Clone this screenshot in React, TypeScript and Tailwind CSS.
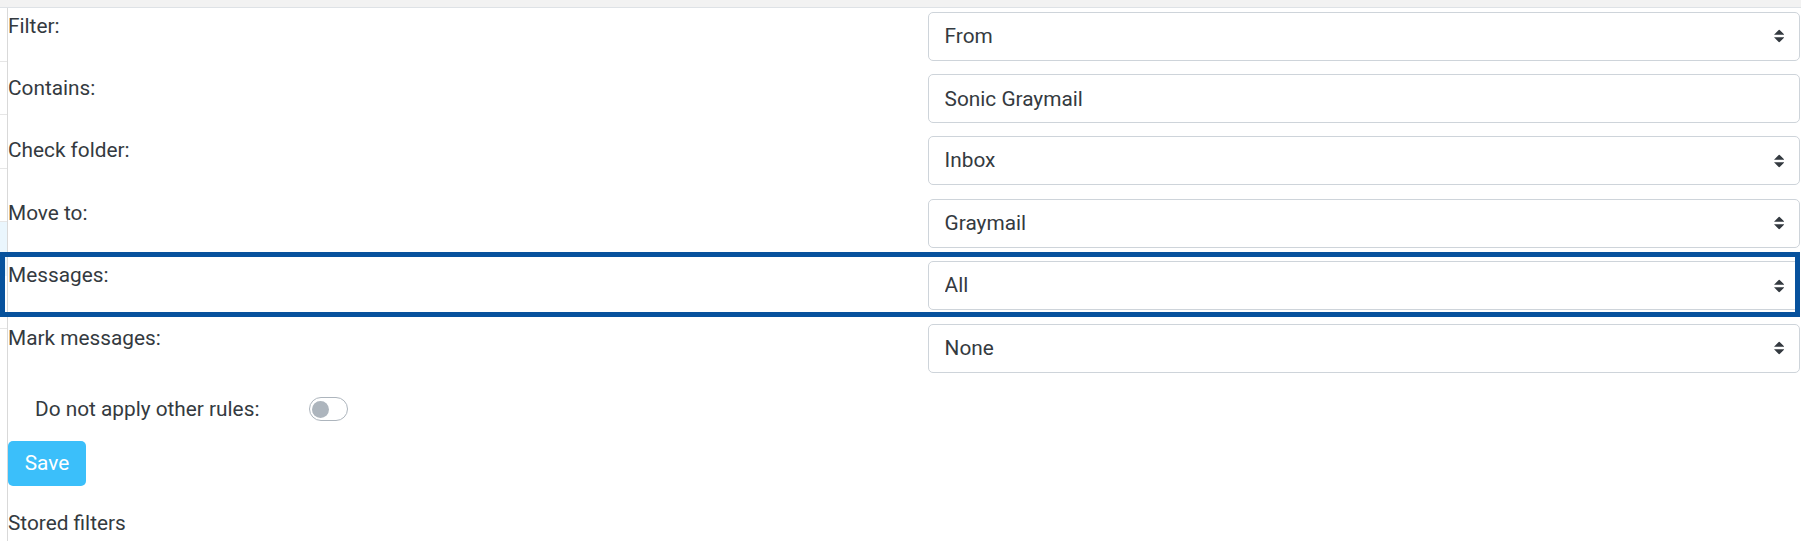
import React from "react";

type Row = {
  label: string;
  value: string;
  kind: "select" | "input";
  highlight?: boolean;
};

const rows: Row[] = [
  { label: "Filter:", value: "From", kind: "select" },
  { label: "Contains:", value: "Sonic Graymail", kind: "input" },
  { label: "Check folder:", value: "Inbox", kind: "select" },
  { label: "Move to:", value: "Graymail", kind: "select" },
  { label: "Messages:", value: "All", kind: "select", highlight: true },
  { label: "Mark messages:", value: "None", kind: "select" },
];

const SortArrows = () => (
  <svg
    viewBox="0 0 4 5"
    className="pointer-events-none absolute right-[15.6px] top-1/2 -translate-y-1/2 w-[10.4px] h-[13px]"
  >
    <path fill="#343a40" d="M2 0L0 2h4zm0 5L0 3h4z" />
  </svg>
);

const FieldRow = ({ row }: { row: Row }) => {
  return (
    <div className="relative flex h-[62.4px]">
      <div className="w-[920px] shrink-0">{row.label}</div>
      <div className="relative flex-1 mt-[1px] h-[49px]">
        {row.kind === "select" ? (
          <>
            <select
              defaultValue={row.value}
              className="appearance-none w-full h-full border border-[#ced4da] rounded-[5px] bg-white pl-[15.6px] pr-[36px] text-[#343a40] outline-none"
            >
              <option>{row.value}</option>
            </select>
            <SortArrows />
          </>
        ) : (
          <input
            defaultValue={row.value}
            className="w-full h-full border border-[#ced4da] rounded-[5px] bg-white px-[15.6px] text-[#343a40] outline-none"
          />
        )}
      </div>
      {row.highlight && (
        <div className="pointer-events-none absolute left-[-8px] right-0 top-[-8.3px] h-[65px] border-[5px] border-[#07529d]" />
      )}
    </div>
  );
};

const App = () => {
  const sideItems = [0, 1, 2, 3, 4, 5];

  return (
    <div className="w-[1801px] h-[541px] overflow-hidden bg-white flex flex-col font-['Roboto','Liberation_Sans',sans-serif] text-[20.8px] leading-[1.5] text-[#343a40]">
      <div className="h-[8px] shrink-0 bg-[#f2f2f2] border-b border-[#dee2e6]" />

      <div className="flex flex-1 min-h-0">
        <aside className="w-[8px] shrink-0 border-r border-[#d9d9d9] flex flex-col">
          {sideItems.map((i) => (
            <div
              key={i}
              className={
                i === 4
                  ? "h-[53.5px] shrink-0 bg-[#eaf6fd]"
                  : "h-[53.5px] shrink-0 border-b border-[#e6e6e6]"
              }
            />
          ))}
        </aside>

        <main className="flex-1 pt-[2.7px] pr-[1px] flex flex-col">
          {rows.map((r) => (
            <FieldRow key={r.label} row={r} />
          ))}

          <div className="mt-[8.7px] flex items-center h-[31.2px] pl-[27px]">
            <span className="w-[273.7px] shrink-0">Do not apply other rules:</span>
            <button
              type="button"
              className="w-[39px] h-[24px] rounded-full border border-[#adb5bd] bg-white flex items-center pl-[2px]"
            >
              <span className="w-[17.5px] h-[17.5px] rounded-full bg-[#adb5bd]" />
            </button>
          </div>

          <div className="mt-[16px]">
            <button
              type="button"
              className="w-[78px] h-[45px] rounded-[5px] bg-[#3bbffa] text-white"
            >
              Save
            </button>
          </div>

          <div className="mt-[21.8px]">Stored filters</div>
        </main>
      </div>
    </div>
  );
};

export default App;
